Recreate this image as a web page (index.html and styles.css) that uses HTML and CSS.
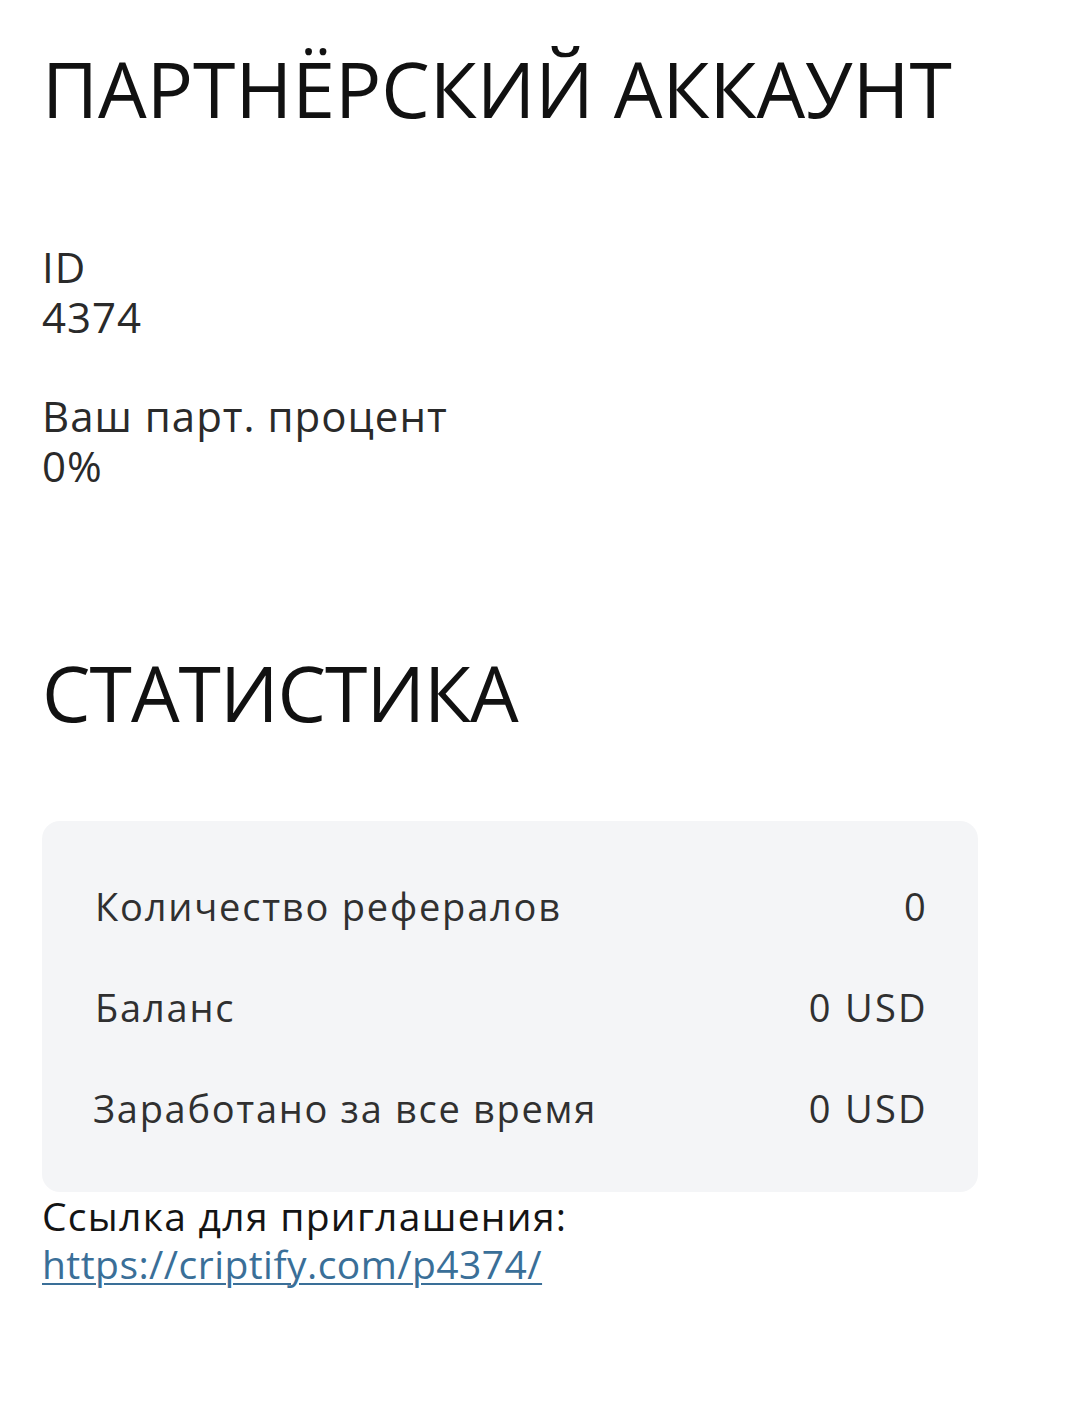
FILE: index.html
```html
<!DOCTYPE html>
<html lang="ru">
<head>
<meta charset="utf-8">
<title>Партнёрский аккаунт</title>
<link rel="stylesheet" href="styles.css">
</head>
<body>
<main class="page">
  <h1 class="title title-account">ПАРТНЁРСКИЙ АККАУНТ</h1>
  <div class="field field-id">
    <div class="field-label">ID</div>
    <div class="field-value">4374</div>
  </div>
  <div class="field field-percent">
    <div class="field-label">Ваш парт. процент</div>
    <div class="field-value">0%</div>
  </div>
  <h2 class="title title-stats">СТАТИСТИКА</h2>
  <div class="stats-card">
    <div class="stats-row"><span>Количество рефералов</span><span class="stats-value">0</span></div>
    <div class="stats-row"><span class="stats-label-short">Баланс</span><span class="stats-value">0 USD</span></div>
    <div class="stats-row"><span class="stats-label-earned">Заработано за все время</span><span class="stats-value">0 USD</span></div>
  </div>
  <div class="invite">
    <div class="invite-label">Ссылка для приглашения:</div>
    <a class="invite-link" href="#">https://criptify.com/p4374/</a>
  </div>
</main>
</body>
</html>
```
FILE: styles.css
```css
html, body {
  margin: 0;
  padding: 0;
  background: #ffffff;
}
body {
  font-family: "Open Sans", "Liberation Sans", sans-serif;
  color: #141414;
}
.page {
  padding: 42px 0 0 42px;
  width: 936px;
}
.title {
  margin: 0;
  font-weight: 400;
  font-size: 77px;
  line-height: 94px;
  color: #111111;
  letter-spacing: 0;
}
.title-stats {
  letter-spacing: -1px;
}
.field {
  font-size: 42px;
  line-height: 50px;
  color: #2a2a2a;
  letter-spacing: 1px;
}
.field-id {
  margin-top: 106px;
}
.field-percent {
  margin-top: 49px;
}
.title-stats {
  margin-top: 155px;
}
.stats-card {
  margin-top: 81px;
  background: #f4f5f7;
  border-radius: 18px;
  padding: 35px 52px 33px 53px;
}
.stats-row {
  display: flex;
  justify-content: space-between;
  font-size: 38px;
  line-height: 101px;
  color: #303030;
  letter-spacing: 1.8px;
}
.stats-label-earned {
  margin-left: -2px;
  letter-spacing: 1.7px;
}
.stats-value {
  letter-spacing: 2.3px;
  margin-right: -2px;
}
.invite {
  font-size: 39px;
  line-height: 48px;
  color: #141414;
}
.invite-label {
  letter-spacing: 1.3px;
}
.invite-link {
  color: #3a6f98;
  letter-spacing: 0.45px;
  text-decoration: underline;
  text-decoration-thickness: 2px;
  text-underline-offset: 4px;
}
```
